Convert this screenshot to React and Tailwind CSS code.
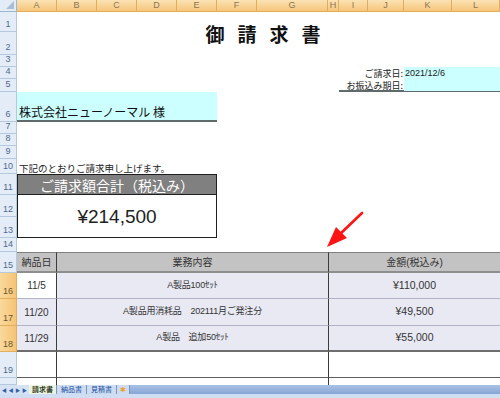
const colHeads = [
    { l: "A", w: "w-[40px]" },
    { l: "B", w: "w-[40px]" },
    { l: "C", w: "w-[40px]" },
    { l: "D", w: "w-[40px]" },
    { l: "E", w: "w-[40px]" },
    { l: "F", w: "w-[40px]" },
    { l: "G", w: "w-[71px]" },
    { l: "H", w: "w-[11px]" },
    { l: "I", w: "w-[29px]" },
    { l: "J", w: "w-[36px]" },
    { l: "K", w: "w-[48px]" },
    { l: "L", w: "flex-1" },
];

const rowHeads = [
    { n: 1, h: "h-[20px]" },
    { n: 2, h: "h-[23px]" },
    { n: 3, h: "h-[12px]" },
    { n: 4, h: "h-[12px]" },
    { n: 5, h: "h-[13px]" },
    { n: 6, h: "h-[30px]" },
    { n: 7, h: "h-[12px]" },
    { n: 8, h: "h-[12px]" },
    { n: 9, h: "h-[13px]" },
    { n: 10, h: "h-[15px]" },
    { n: 11, h: "h-[21px]" },
    { n: 12, h: "h-[22px]" },
    { n: 13, h: "h-[21px]" },
    { n: 14, h: "h-[14px]" },
    { n: 15, h: "h-[21px]" },
    { n: 16, h: "h-[26px]", sel: true },
    { n: 17, h: "h-[27px]", sel: true },
    { n: 18, h: "h-[26px]", sel: true },
    { n: 19, h: "h-[26px]" },
    { n: 20, h: "h-[7px]", hide: true },
];

const items = [
    { d: "11/5", t: "A製品100ｾｯﾄ", p: "¥110,000", first: "bg-white" },
    { d: "11/20", t: "A製品用消耗品　202111月ご発注分", p: "¥49,500", first: "bg-[#e9e9f3]" },
    { d: "11/29", t: "A製品　追加50ｾｯﾄ", p: "¥55,000", first: "bg-[#e9e9f3]" },
];

const RedArrow = () => (
    <svg className="absolute left-0 top-0 pointer-events-none" width="500" height="398" viewBox="0 0 500 398">
        <line x1="362" y1="213" x2="338" y2="236" stroke="#ff1414" strokeWidth="2.6" strokeLinecap="round" />
        <polygon points="327,247 347,238 336,227" fill="#ff1414" />
    </svg>
);

const App = () => {
    return (
        <div className="relative w-[500px] h-[398px] overflow-hidden bg-white font-['Liberation_Sans','Noto_Sans_CJK_JP',sans-serif] text-black">
            {/* column header */}
            <div className="flex h-[12px]">
                <div className="relative w-[17px] bg-[#e4ecf7] border-r border-b border-[#9eb6ce]">
                    <div className="absolute right-[2px] bottom-[2px] w-0 h-0 border-l-[8px] border-t-[8px] border-l-transparent border-t-transparent border-r-0 border-b-0 [border-bottom:8px_solid_#a9bdd6]" />
                </div>
                {colHeads.map((c) => (
                    <div
                        key={c.l}
                        className={`${c.w} flex items-center justify-center bg-linear-to-b from-[#fbe3b4] to-[#f6c57a] border-r border-b border-[#e2ad5c] text-[9px] leading-none text-[#8a7654]`}
                    >
                        {c.l}
                    </div>
                ))}
            </div>

            <div className="flex">
                {/* row header */}
                <div className="flex flex-col w-[17px]">
                    {rowHeads.map((r) => (
                        <div
                            key={r.n}
                            className={`${r.h} flex items-end justify-center overflow-hidden border-r border-b text-[9px] leading-none pb-[2px] ${
                                r.sel
                                    ? "bg-linear-to-r from-[#f9d99c] to-[#f5c474] border-[#e2ad5c] text-[#6b5636]"
                                    : "bg-[#e4ecf7] border-[#b5c8de] text-[#4f6a8f]"
                            }`}
                        >
                            {r.hide ? null : r.n}
                        </div>
                    ))}
                </div>

                {/* sheet */}
                <div className="flex-1 grid grid-cols-[40px_40px_40px_40px_40px_40px_71px_11px_29px_36px_48px_1fr] grid-rows-[20px_23px_12px_12px_13px_30px_12px_12px_13px_15px_21px_22px_21px_14px_21px_26px_27px_26px_26px_7px]">
                    <div className="col-start-1 col-end-13 row-start-1 row-end-3 flex items-center justify-center pl-[22px]">
                        <h1 className="font-['Noto_Sans_CJK_JP',sans-serif] text-[19px] font-bold tracking-[13px] leading-none text-[#111]">
                            御請求書
                        </h1>
                    </div>

                    <div className="col-start-9 col-end-13 row-start-4 row-end-6 grid grid-cols-[65px_1fr] grid-rows-[12px_12px] border-b-2 border-[#5f6b6b] text-[9px] leading-none text-[#222]">
                        <div className="flex items-center justify-end pr-[1px] font-['Noto_Sans_CJK_JP',sans-serif]">ご請求日:</div>
                        <div className="flex items-center bg-[#ccffff] pl-[1px]">2021/12/6</div>
                        <div className="flex items-center justify-end pr-[1px] font-['Noto_Sans_CJK_JP',sans-serif]">お振込み期日:</div>
                        <div className="bg-[#ccffff]" />
                    </div>

                    <div className="col-start-1 col-end-6 row-start-6 row-end-7 flex items-end bg-[#ccffff] border-b-2 border-[#5f6b6b] pl-[2px] pb-[2px] text-[12px] leading-none font-['Noto_Sans_CJK_JP',sans-serif] text-[#111]">
                        株式会社ニューノーマル 様
                    </div>

                    <div className="col-start-1 col-end-8 row-start-10 row-end-11 flex items-end pl-[2px] pb-[1px] text-[9.5px] leading-none font-['Noto_Sans_CJK_JP',sans-serif] text-[#222]">
                        下記のとおりご請求申し上げます。
                    </div>

                    <div className="col-start-1 col-end-6 row-start-11 row-end-14 flex flex-col border border-[#1f1f1f]">
                        <div className="h-[20px] flex items-center justify-center bg-[#808080] border-b border-[#1f1f1f] text-[14px] leading-none text-white font-['Noto_Sans_CJK_JP',sans-serif]">
                            ご請求額合計（税込み）
                        </div>
                        <div className="flex-1 flex items-center justify-center text-[19px] leading-none text-[#222]">
                            ¥214,500
                        </div>
                    </div>

                    <div className="col-start-1 col-end-13 row-start-15 row-end-21 grid grid-cols-[40px_272px_1fr] grid-rows-[21px_26px_27px_26px_26px_7px] text-[#333] font-['Liberation_Sans','Noto_Sans_CJK_JP',sans-serif]">
                        <div className="flex items-center justify-center bg-[#c3c3c3] border-t border-[#7f7f7f] border-b-2 border-b-[#8e8e8e] border-r border-r-[#3c3c3c] text-[10px]">納品日</div>
                        <div className="flex items-center justify-center bg-[#c3c3c3] border-t border-[#7f7f7f] border-b-2 border-b-[#8e8e8e] border-r border-r-[#3c3c3c] text-[10px]">業務内容</div>
                        <div className="flex items-center justify-center bg-[#c3c3c3] border-t border-[#7f7f7f] border-b-2 border-b-[#8e8e8e] text-[10px]">金額(税込み)</div>

                        {items.map((it, i) => (
                            <div key={it.d} className="contents">
                                <div className={`flex items-center justify-center ${it.first} border-r border-r-[#3c3c3c] ${i === 2 ? "border-b-2 border-b-[#6e6e6e]" : "border-b border-b-[#b3b3c6]"} text-[10px]`}>
                                    {it.d}
                                </div>
                                <div className={`flex items-center justify-center bg-[#e9e9f3] border-r border-r-[#3c3c3c] ${i === 2 ? "border-b-2 border-b-[#6e6e6e]" : "border-b border-b-[#b3b3c6]"} text-[9px] tracking-[-0.2px]`}>
                                    {it.t}
                                </div>
                                <div className={`flex items-center justify-center bg-[#e9e9f3] ${i === 2 ? "border-b-2 border-b-[#6e6e6e]" : "border-b border-b-[#b3b3c6]"} text-[10.5px]`}>
                                    {it.p}
                                </div>
                            </div>
                        ))}

                        <div className="bg-white border-r border-r-[#3c3c3c] border-b border-b-[#5e5e5e]" />
                        <div className="bg-white border-r border-r-[#3c3c3c] border-b border-b-[#5e5e5e]" />
                        <div className="bg-white border-b border-b-[#5e5e5e]" />
                        <div className="bg-white border-r border-r-[#3c3c3c]" />
                        <div className="bg-white border-r border-r-[#3c3c3c]" />
                        <div className="bg-white" />
                    </div>
                </div>
            </div>

            {/* sheet tabs */}
            <div className="flex h-[9px] bg-linear-to-b from-[#a9c1e4] to-[#87a6d6] text-[7px] leading-none font-['Noto_Sans_CJK_JP',sans-serif]">
                <div className="w-[29px] flex items-center justify-around px-[1px] bg-[#d6e3f4] text-[#3560a8] text-[5px]">
                    <span>◀</span>
                    <span>◀</span>
                    <span>▶</span>
                    <span>▶</span>
                </div>
                <div className="flex items-center px-[3px] bg-[#eef3e2] text-[#2d3a1c] font-bold border-r border-[#7c96bf]">請求書</div>
                <div className="flex items-center px-[4px] bg-[#cddcf1] text-[#2250a0] border-r border-[#7c96bf]">納品書</div>
                <div className="flex items-center px-[4px] bg-[#cddcf1] text-[#2250a0] border-r border-[#7c96bf]">見積書</div>
                <div className="flex items-center px-[3px] bg-[#cddcf1] border-r border-[#7c96bf]">
                    <span className="text-[7px] text-[#f0a030]">✱</span>
                </div>
                <div className="flex-1" />
            </div>
            <div className="h-[4px] bg-[#cfdef2]" />

            <RedArrow />
        </div>
    );
};

export default App;
